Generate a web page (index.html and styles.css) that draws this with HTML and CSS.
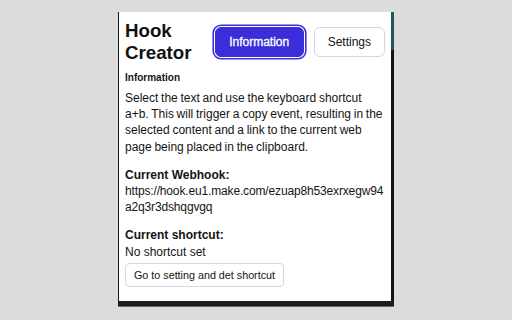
FILE: index.html
```html
<!DOCTYPE html>
<html lang="en">
<head>
<meta charset="utf-8">
<title>Hook Creator</title>
<link rel="stylesheet" href="styles.css">
</head>
<body>
<div class="popup">
  <div class="frame">
    <div class="edge-left"></div>
    <main class="panel">
      <header class="header">
        <h1 class="title">Hook<br>Creator</h1>
        <nav class="tabs">
          <button class="tab tab-active">Information</button>
          <button class="tab">Settings</button>
        </nav>
      </header>
      <h2 class="section-title">Information</h2>
      <p class="text desc">Select the text and use the keyboard shortcut a+b. This will trigger a copy event, resulting in the selected content and a link to the current web page being placed in the clipboard.</p>
      <h3 class="label">Current Webhook:</h3>
      <p class="text url">https://hook.eu1.make.com/ezuap8h53exrxegw94a2q3r3dshqgvgq</p>
      <h3 class="label">Current shortcut:</h3>
      <p class="text tight">No shortcut set</p>
      <button class="small-btn">Go to setting and det shortcut</button>
    </main>
    <div class="edge-right"></div>
  </div>
  <div class="edge-bottom"></div>
</div>
</body>
</html>
```
FILE: styles.css
```css
html, body {
  margin: 0;
  padding: 0;
}
body {
  background: #dcdcdc;
  font-family: "Liberation Sans", Arial, sans-serif;
  color: #141414;
  width: 512px;
  height: 320px;
  overflow: hidden;
}
.popup {
  margin: 12px 0 0 118px;
  width: 276px;
}
.frame {
  display: flex;
  height: 289px;
}
.edge-left {
  width: 1px;
  background: #151515;
}
.edge-right {
  width: 3px;
  background: linear-gradient(to bottom, #1f5a5a 0, #1f5a5a 38px, #141416 38px);
}
.edge-bottom {
  height: 5px;
  background: #1d1d21;
  border-bottom: 1px solid #6a6a6a;
}
.panel {
  flex: 1;
  background: #ffffff;
  padding: 7.5px 6px 0 6px;
  min-width: 0;
}
.header {
  display: flex;
  justify-content: space-between;
  align-items: center;
}
.title {
  margin: 0;
  font-size: 18.72px;
  line-height: 22px;
  font-weight: 700;
  color: #111;
}
.tabs {
  display: flex;
  gap: 10px;
}
.tab {
  font-family: "Liberation Sans", Arial, sans-serif;
  font-size: 12px;
  height: 30px;
  padding: 0 13px;
  border: 1px solid #d6d6da;
  border-radius: 6px;
  background: #ffffff;
  color: #111;
}
.tab-active {
  background: #3a2edb;
  border-color: #3a2edb;
  color: #ffffff;
  padding: 0 13px;
  width: 89px;
  -webkit-text-stroke: 0.3px #ffffff;
  box-shadow: 0 0 0 1px #ffffff, 0 0 0 2.6px #3a2edb;
}
.section-title {
  margin: 8px 0 6.5px;
  font-size: 10px;
  line-height: 12px;
  font-weight: 700;
}
.text {
  margin: 0 0 12px;
  font-size: 12px;
  line-height: 16.2px;
}
.desc {
  word-spacing: -0.6px;
}
.url {
  word-break: break-all;
  letter-spacing: -0.15px;
}
.tight {
  margin-bottom: 3px;
}
.label {
  margin: 0;
  font-size: 12px;
  line-height: 16.2px;
  font-weight: 700;
}
.small-btn {
  font-family: "Liberation Sans", Arial, sans-serif;
  font-size: 10.75px;
  height: 24px;
  padding: 0 8px;
  border: 1px solid #d8d8dc;
  border-radius: 4px;
  background: #ffffff;
  color: #141414;
}
```
